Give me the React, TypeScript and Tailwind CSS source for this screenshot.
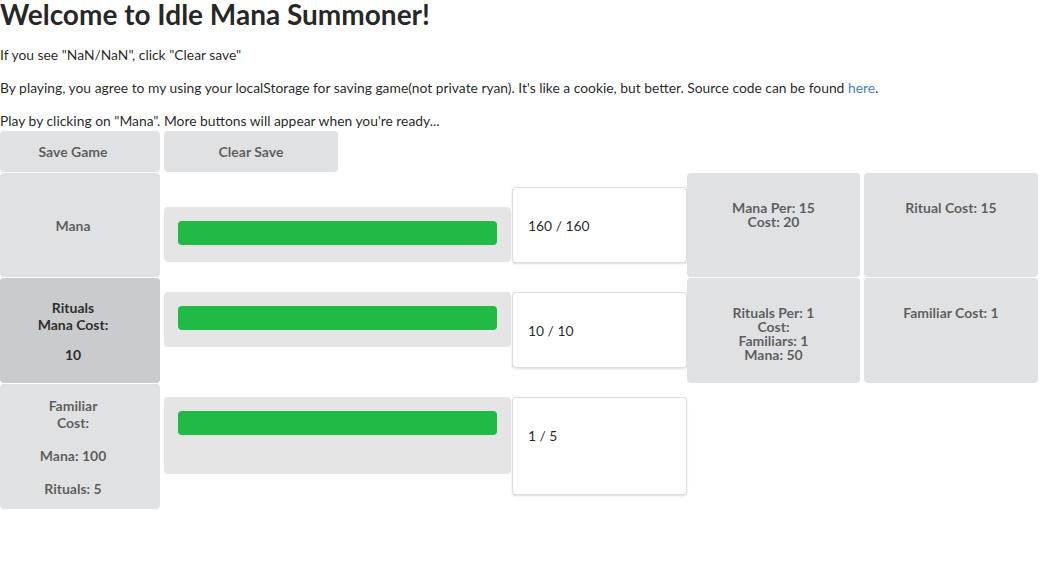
import React from "react";

// Semantic-UI-ish look: Lato, grey buttons, green progress bars
const btn = "rounded-[4px] bg-[#e0e1e2] text-[rgba(0,0,0,0.6)] font-bold text-[14px]";

function Progress({ top, height }: { top: string; height: string }) {
  return (
    <div className={`w-[347px] ${top} ${height} shrink-0 rounded-[4px] bg-[rgba(0,0,0,0.1)] p-[14px]`}>
      <div className="h-[24px] w-full rounded-[4px] bg-[#21ba45]" />
    </div>
  );
}

function Value({ text, height }: { text: string; height: string }) {
  return (
    <div
      className={`mt-[14px] w-[175px] ${height} shrink-0 rounded-[4px] border border-[rgba(34,36,38,0.15)] bg-white px-[15px] pt-[28px] leading-[20px] text-[rgba(0,0,0,0.87)] shadow-[0_1px_2px_0_rgba(34,36,38,0.15)]`}
    >
      {text}
    </div>
  );
}

export default function App() {
  return (
    <div className="min-h-screen bg-white font-['Lato','Liberation_Sans',sans-serif] text-[13.85px] text-[rgba(0,0,0,0.87)]">
      <h1 className="-mt-[4px] mb-[13px] h-[36px] text-[28px] leading-[36px] font-bold">
        Welcome to Idle Mana Summoner!
      </h1>
      <p className="mb-[13px] leading-[20px]">If you see "NaN/NaN", click "Clear save"</p>
      <p className="mb-[13px] leading-[20px]">
        By playing, you agree to my using your localStorage for saving game(not private ryan). It's like a cookie, but
        better. Source code can be found <a className="text-[#4183c4]">here</a>.
      </p>
      <p className="leading-[20px]">Play by clicking on "Mana". More buttons will appear when you're ready...</p>

      {/* save / clear */}
      <div className="flex h-[42px] gap-[4px]">
        <button className={`${btn} h-[41px] w-[160px] pr-[14px]`}>Save Game</button>
        <button className={`${btn} h-[41px] w-[174px]`}>Clear Save</button>
      </div>

      {/* Mana row */}
      <div className="flex h-[105px] items-start">
        <button className={`${btn} h-[104px] w-[160px] shrink-0 pr-[14px]`}>Mana</button>
        <div className="w-[4px] shrink-0" />
        <Progress top="mt-[34px]" height="h-[55px]" />
        <div className="w-[1px] shrink-0" />
        <Value text="160 / 160" height="h-[76px]" />
        <div className={`${btn} h-[104px] w-[173px] shrink-0 pt-[28px] text-center leading-[14px]`}>
          Mana Per: 15
          <br />
          Cost: 20
        </div>
        <div className="w-[4px] shrink-0" />
        <div className={`${btn} h-[104px] w-[174px] shrink-0 pt-[28px] text-center leading-[14px]`}>
          Ritual Cost: 15
        </div>
      </div>

      {/* Rituals row */}
      <div className="flex h-[106px] items-start">
        <button className="flex h-[105px] w-[160px] shrink-0 flex-col items-center justify-center rounded-[4px] bg-[#cacbcd] pr-[14px] text-[14px] leading-[17px] font-bold text-[rgba(0,0,0,0.8)]">
          <span>Rituals</span>
          <span>Mana Cost:</span>
          <span className="mt-[13px]">10</span>
        </button>
        <div className="w-[4px] shrink-0" />
        <Progress top="mt-[14px]" height="h-[55px]" />
        <div className="w-[1px] shrink-0" />
        <Value text="10 / 10" height="h-[76px]" />
        <div className={`${btn} h-[105px] w-[173px] shrink-0 pt-[28px] text-center leading-[14px]`}>
          Rituals Per: 1
          <br />
          Cost:
          <br />
          Familiars: 1
          <br />
          Mana: 50
        </div>
        <div className="w-[4px] shrink-0" />
        <div className={`${btn} h-[105px] w-[174px] shrink-0 pt-[28px] text-center leading-[14px]`}>
          Familiar Cost: 1
        </div>
      </div>

      {/* Familiar row */}
      <div className="flex h-[126px] items-start">
        <button className={`${btn} flex h-[125px] w-[160px] shrink-0 flex-col items-center justify-center pr-[14px] leading-[17px]`}>
          <span>Familiar</span>
          <span>Cost:</span>
          <span className="mt-[16px]">Mana: 100</span>
          <span className="mt-[16px]">Rituals: 5</span>
        </button>
        <div className="w-[4px] shrink-0" />
        <Progress top="mt-[13px]" height="h-[77px]" />
        <div className="w-[1px] shrink-0" />
        <div className="-mt-[1px]">
          <Value text="1 / 5" height="h-[98px]" />
        </div>
      </div>
    </div>
  );
}
